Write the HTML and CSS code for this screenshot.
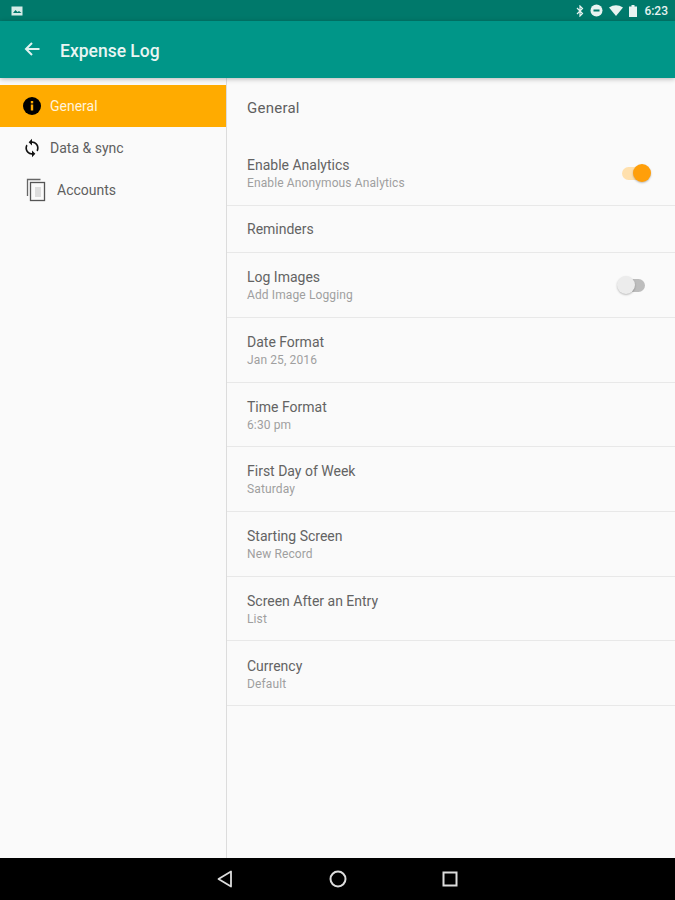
FILE: index.html
```html
<!DOCTYPE html>
<html lang="en">
<head>
<meta charset="utf-8">
<title>Expense Log</title>
<link rel="stylesheet" href="styles.css">
</head>
<body>
<div class="screen">
  <div class="statusbar">
    <svg class="st-pic" width="12" height="10" viewBox="0 0 12 10"><rect x="0.5" y="0.5" width="11" height="9" fill="#d5ebe7"/><path d="M2 7l2.5-3 2 2 1.5-1 2.500 2z" fill="#00796b"/></svg>
    <div class="st-right">
      <svg width="8" height="12" viewBox="0 0 8 12"><path d="M1 3l5.500 5.500L4 11V1l2.500 2.500L1 9" fill="none" stroke="#e8f3f1" stroke-width="1.200"/></svg>
      <svg width="13" height="13" viewBox="0 0 13 13"><circle cx="6.500" cy="6.500" r="6" fill="#e8f3f1"/><rect x="3.500" y="5.500" width="6" height="2" fill="#00796b"/></svg>
      <svg width="14" height="11" viewBox="0 0 14 11"><path d="M0 2.500Q7-2 14 2.500L7 11z" fill="#e8f3f1"/></svg>
      <svg width="8" height="12" viewBox="0 0 8 12"><path d="M2.500 0h3v1.500H8V12H0V1.500h2.500z" fill="#e8f3f1"/></svg>
      <span class="clock">6:23</span>
    </div>
  </div>
  <header class="toolbar">
    <svg class="back" width="16" height="14" viewBox="0 0 16 14"><path d="M15.500 7H2.500M8 1L2 7l6 6" fill="none" stroke="#e3f2f0" stroke-width="2"/></svg>
    <h1 class="title">Expense Log</h1>
  </header>
  <main class="content">
    <nav class="sidebar">
      <div class="nav-item active">
        <svg class="nav-icon" width="20" height="20" viewBox="0 0 20 20"><circle cx="10" cy="10" r="9" fill="#000"/><rect x="8.800" y="8.500" width="2.400" height="6" fill="#ffab00"/><rect x="8.800" y="5" width="2.400" height="2.400" fill="#ffab00"/></svg>
        <span>General</span>
      </div>
      <div class="nav-item">
        <svg class="nav-icon" width="20" height="20" viewBox="2 0 20 24"><path d="M12 4V1L8 5l4 4V6c3.310 0 6 2.690 6 6 0 1.010-.25 1.970-.7 2.800l1.460 1.460C19.540 15.030 20 13.570 20 12c0-4.420-3.580-8-8-8zm0 14c-3.310 0-6-2.690-6-6 0-1.010.25-1.970.7-2.800L5.240 7.740C4.460 8.970 4 10.430 4 12c0 4.420 3.580 8 8 8v3l4-4-4-4v3z" fill="#111"/></svg>
        <span>Data &amp; sync</span>
      </div>
      <div class="nav-item accounts">
        <svg class="nav-icon" width="20" height="24" viewBox="0 0 20 24"><path d="M1.500 18V1.500h13" fill="none" stroke="#666" stroke-width="1.300"/><rect x="4.500" y="4.500" width="14" height="18" fill="#fafafa" stroke="#555" stroke-width="1.300"/><rect x="9" y="9" width="6" height="10" fill="#ddd"/></svg>
        <span>Accounts</span>
      </div>
    </nav>
    <section class="settings">
      <h2 class="section-title">General</h2>
      <div class="row first">
        <div class="row-text"><div class="row-title">Enable Analytics</div><div class="row-sub">Enable Anonymous Analytics</div></div>
        <div class="switch on"><span class="track"></span><span class="thumb"></span></div>
      </div>
      <div class="row short">
        <div class="row-text"><div class="row-title">Reminders</div></div>
      </div>
      <div class="row">
        <div class="row-text"><div class="row-title">Log Images</div><div class="row-sub">Add Image Logging</div></div>
        <div class="switch off"><span class="track"></span><span class="thumb"></span></div>
      </div>
      <div class="row"><div class="row-text"><div class="row-title">Date Format</div><div class="row-sub">Jan 25, 2016</div></div></div>
      <div class="row"><div class="row-text"><div class="row-title">Time Format</div><div class="row-sub">6:30 pm</div></div></div>
      <div class="row"><div class="row-text"><div class="row-title">First Day of Week</div><div class="row-sub">Saturday</div></div></div>
      <div class="row"><div class="row-text"><div class="row-title">Starting Screen</div><div class="row-sub">New Record</div></div></div>
      <div class="row"><div class="row-text"><div class="row-title">Screen After an Entry</div><div class="row-sub">List</div></div></div>
      <div class="row"><div class="row-text"><div class="row-title">Currency</div><div class="row-sub">Default</div></div></div>
    </section>
  </main>
  <footer class="navbar">
    <svg class="nav-back" width="16" height="18" viewBox="0 0 16 18"><path d="M14 1.500v15L1.500 9z" fill="none" stroke="#ddd" stroke-width="1.800" stroke-linejoin="round"/></svg>
    <svg class="nav-home" width="18" height="18" viewBox="0 0 18 18"><circle cx="9" cy="9" r="7.500" fill="none" stroke="#ddd" stroke-width="2"/></svg>
    <svg width="16" height="16" viewBox="0 0 16 16"><rect x="1.500" y="1.500" width="13" height="13" fill="none" stroke="#ddd" stroke-width="2"/></svg>
  </footer>
</div>
</body>
</html>
```
FILE: styles.css
```css
* { box-sizing: border-box; }
html, body { margin: 0; padding: 0; }
body { font-family: Roboto, "Noto Sans", sans-serif; background: #fafafa; }
.screen { width: 675px; height: 900px; display: flex; flex-direction: column; overflow: hidden; }
.statusbar { height: 21px; background: #00796b; display: flex; align-items: center; justify-content: space-between; padding: 0 7px 0 11px; flex: none; }
.st-right { display: flex; align-items: center; gap: 6px; }
.clock { color: #e8f3f1; font-size: 12px; font-weight: 500; margin-left: 1px; }
.toolbar { height: 57px; background: #009688; display: flex; align-items: center; padding: 0 0 0 24px; flex: none; position: relative; z-index: 2; box-shadow: 0 1px 5px rgba(0,0,0,.28); }
.back { margin-top: -2px; }
.title { margin: 2px 0 0 20px; color: #e9f5f3; font-size: 17.500px; font-weight: 500; }
.content { flex: 1; display: flex; min-height: 0; }
.sidebar { width: 227px; flex: none; border-right: 1px solid #dcdcdc; padding-top: 7px; }
.nav-item { height: 42px; display: flex; align-items: center; padding-left: 22px; font-size: 14px; color: #5f5f5f; gap: 8px; }
.nav-item.active { background: #ffab00; color: #fff3da; }
.nav-item.accounts { padding-left: 26px; gap: 11px; }
.settings { flex: 1; min-width: 0; }
.section-title { margin: 0; height: 63px; padding: 21px 0 0 20px; font-size: 15px; line-height: 18px; font-weight: 400; letter-spacing: .25px; color: #5f5f5f; }
.row { height: 64.700px; padding: 1.500px 30px 0 20px; border-bottom: 1px solid #e8e8e8; display: flex; align-items: center; justify-content: space-between; }
.row.short { height: 47.600px; padding-top: 1px; }
.row-title { font-size: 14px; line-height: 18px; color: #636363; }
.row-sub { font-size: 12px; line-height: 16px; margin-top: 1px; letter-spacing: .12px; color: #9f9f9f; }
.switch { position: relative; width: 30px; height: 20px; }
.track { position: absolute; left: 1px; top: 3px; width: 27px; height: 13px; border-radius: 7px; }
.thumb { position: absolute; top: 0; width: 18px; height: 18px; border-radius: 50%; box-shadow: 0 1px 2px rgba(0,0,0,.25); }
.switch.on { left: 6px; }
.switch.on .track { background: #ffe0ad; }
.switch.on .thumb { right: 0; background: #ff9f0a; }
.switch.off { left: 2px; }
.switch.off .track { background: #bdbdbd; }
.switch.off .thumb { left: 0; background: #ececec; }
.navbar { height: 42px; background: #000; display: flex; align-items: center; justify-content: center; gap: 96px; flex: none; padding-right: 1px; }
.nav-back { margin-right: -1px; }
.nav-home { margin-left: 1px; margin-right: -1px; }
```
